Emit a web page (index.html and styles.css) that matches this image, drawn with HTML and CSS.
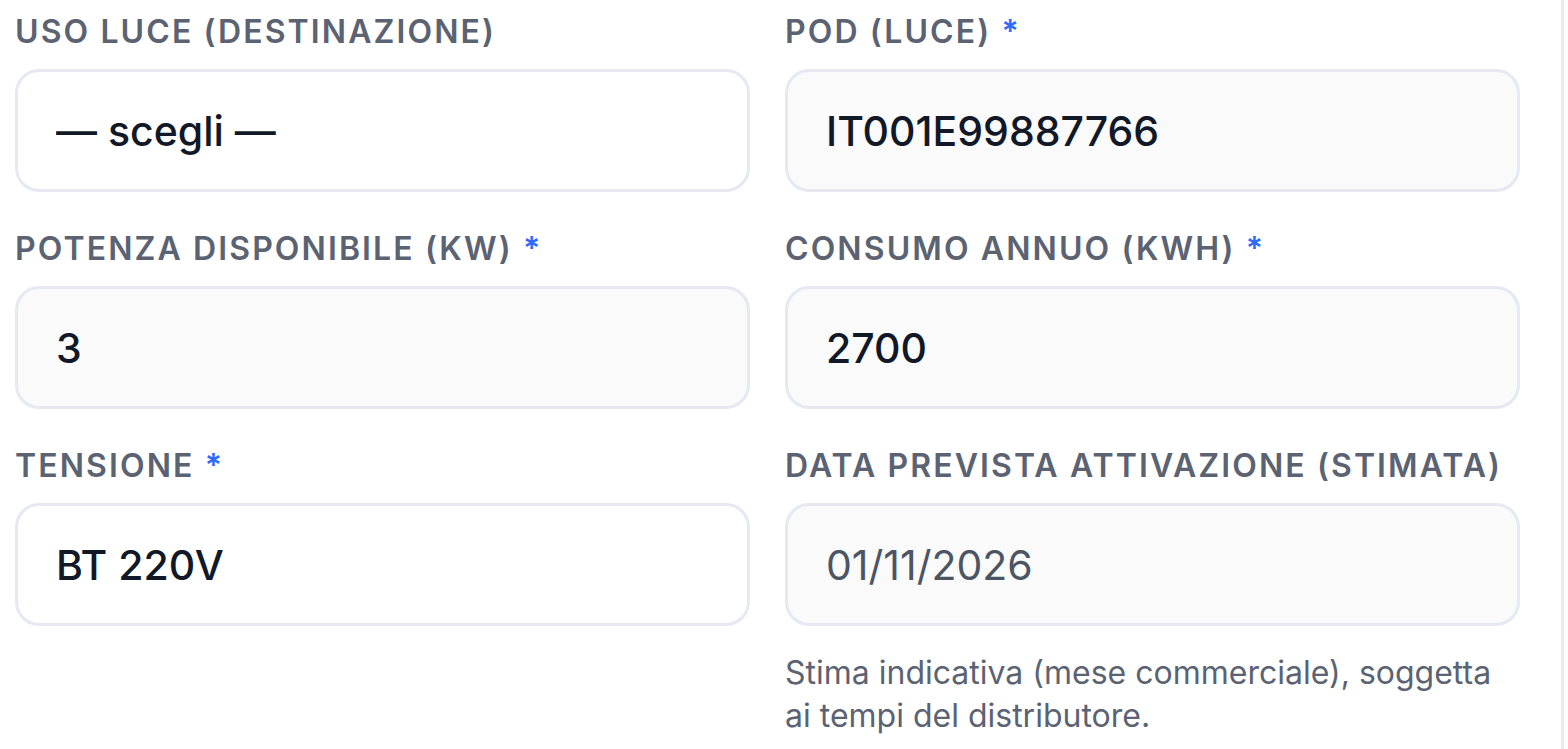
FILE: index.html
```html
<!DOCTYPE html>
<html lang="it">
<head>
    <meta charset="UTF-8">
    <meta name="viewport" content="width=device-width, initial-scale=1.0">
    <title>Fornitura luce</title>
    <link rel="stylesheet" href="styles.css">
</head>
<body>

<div class="panel">
    <form class="form-grid">
        <div class="field">
            <label class="field-label" for="uso">Uso luce (destinazione)</label>
            <select class="control control-select" id="uso">
                <option>— scegli —</option>
            </select>
        </div>
        <div class="field">
            <label class="field-label" for="pod">POD (luce) <span class="req">*</span></label>
            <input class="control" type="text" id="pod" value="IT001E99887766">
        </div>

        <div class="field">
            <label class="field-label" for="potenza">Potenza disponibile (kW) <span class="req">*</span></label>
            <input class="control" type="text" id="potenza" value="3">
        </div>
        <div class="field">
            <label class="field-label" for="consumo">Consumo annuo (kWh) <span class="req">*</span></label>
            <input class="control" type="text" id="consumo" value="2700">
        </div>

        <div class="field">
            <label class="field-label" for="tensione">Tensione <span class="req">*</span></label>
            <select class="control control-select" id="tensione">
                <option>BT 220V</option>
            </select>
        </div>
        <div class="field">
            <label class="field-label" for="data">Data prevista attivazione (stimata)</label>
            <input class="control control-muted" type="text" id="data" value="01/11/2026" readonly>
            <p class="hint">Stima indicativa (mese commerciale), soggetta ai tempi del distributore.</p>
        </div>
    </form>
</div>

</body>
</html>
```

FILE: styles.css
```css
body {
    margin: 0;
    font-family: Inter, "Noto Sans", sans-serif;
    background-color: #fff;
}
.panel {
    width: 1564px;
    height: 749px;
    box-sizing: border-box;
    border-right: 3px solid #e8ebf2;
    padding: 12px 0 0 15px;
}
.form-grid {
    display: grid;
    grid-template-columns: 735px 735px;
    column-gap: 35px;
    row-gap: 37px;
    margin: 0;
}
.field {
    display: flex;
    flex-direction: column;
}
.field-label {
    font-size: 32px;
    line-height: 40px;
    font-weight: 600;
    letter-spacing: 2.1px;
    text-transform: uppercase;
    color: #5b6373;
    margin-bottom: 17px;
}
.req {
    color: #2f6bff;
}
.control {
    height: 123px;
    box-sizing: border-box;
    border: 3px solid #e6e8f2;
    border-radius: 24px;
    padding: 0 38px;
    font-family: Inter, "Noto Sans", sans-serif;
    font-size: 41px;
    font-weight: 500;
    color: #111827;
    background-color: #fafafb;
    outline: none;
    margin: 0;
}
.control-select {
    appearance: none;
    -webkit-appearance: none;
    background-color: #fff;
}
.control-muted {
    font-weight: 400;
    color: #4b5563;
}
.hint {
    margin: 25px 0 0;
    font-size: 32px;
    line-height: 43px;
    color: #5b6373;
}
```
